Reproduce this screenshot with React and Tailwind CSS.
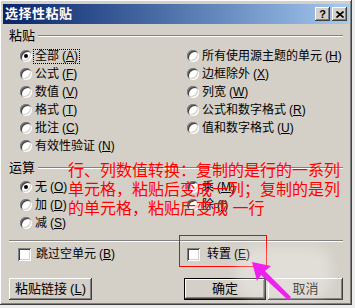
import React from 'react';

const raised =
  'shadow-[inset_-1px_-1px_0_#404040,inset_1px_1px_0_#ffffff,inset_-2px_-2px_0_#808080,inset_2px_2px_0_#d4d0c8]';

const K = ({ c }) => (
  <span className="ml-[3px]">
    (<span className="underline underline-offset-1">{c}</span>)
  </span>
);

const Radio = ({ checked }) => (
  <span className="relative inline-block w-[12px] h-[12px] shrink-0 rounded-full bg-white shadow-[inset_1px_1px_0_#808080,inset_-1px_-1px_0_#ffffff,inset_2px_2px_0_#404040,inset_-2px_-2px_0_#d4d0c8]">
    {checked && <span className="absolute left-[4px] top-[4px] w-[4px] h-[4px] rounded-full bg-black" />}
  </span>
);

const Check = () => (
  <span className="inline-block w-[13px] h-[13px] shrink-0 bg-white shadow-[inset_1px_1px_0_#808080,inset_-1px_-1px_0_#ffffff,inset_2px_2px_0_#404040,inset_-2px_-2px_0_#d4d0c8]" />
);

const Row = ({ label, k, checked, focus }) => (
  <div className="flex items-center h-[18px]">
    <Radio checked={checked} />
    <span className={`ml-[2px] px-[1px] leading-[13px] ${focus ? 'outline-1 outline-dotted outline-black' : ''}`}>
      {label}
      <K c={k} />
    </span>
  </div>
);

const Header = ({ label }) => (
  <div className="flex items-center h-[14px]">
    <span className="text-[13px]">{label}</span>
    <div className="flex-1 ml-[3px] h-[2px] border-t border-t-[#808080] border-b border-b-white" />
  </div>
);

const Button = ({ children, w, def }) => (
  <div
    className={`${w} h-[22px] flex items-center justify-center text-[13px] ${def ? 'border border-black' : ''} ${raised}`}
  >
    {children}
  </div>
);

export default function App() {
  return (
    <div
      className="relative w-[355px] h-[308px] bg-[#ececec] overflow-hidden text-black text-[12px]"
      style={{ fontFamily: '"Liberation Sans", "Noto Sans CJK SC", sans-serif' }}
    >
      <div className={`relative w-[352px] h-[305px] bg-[#d4d0c8] pt-[4px] ${raised}`}>
        {/* title bar */}
        <div className="mx-[3px] h-[20px] flex items-center bg-gradient-to-r from-[#0a246a] to-[#a6caf0]">
          <span className="pl-[2px] text-white font-bold text-[13px] tracking-[0.5px]">选择性粘贴</span>
          <div className="ml-auto mr-[2px] flex gap-[2px]">
            <div className={`w-[15px] h-[14px] bg-[#d4d0c8] flex items-center justify-center text-[11px] font-bold leading-none ${raised}`}>
              ?
            </div>
            <div className={`w-[15px] h-[14px] bg-[#d4d0c8] flex items-center justify-center ${raised}`}>
              <svg width="8" height="7" viewBox="0 0 8 7">
                <path d="M0.5 0.5 L7.5 6.5 M7.5 0.5 L0.5 6.5" stroke="black" strokeWidth="1.6" />
              </svg>
            </div>
          </div>
        </div>

        <div className="px-[9px]">
          <div className="mt-[5px]">
            <Header label="粘贴" />
          </div>
          <div className="mt-[4px] flex">
            <div className="w-[178px] pl-[11px]">
              <Row label="全部" k="A" checked focus />
              <Row label="公式" k="F" />
              <Row label="数值" k="V" />
              <Row label="格式" k="T" />
              <Row label="批注" k="C" />
              <Row label="有效性验证" k="N" />
            </div>
            <div>
              <Row label="所有使用源主题的单元" k="H" />
              <Row label="边框除外" k="X" />
              <Row label="列宽" k="W" />
              <Row label="公式和数字格式" k="R" />
              <Row label="值和数字格式" k="U" />
            </div>
          </div>

          <div className="mt-[6px]">
            <Header label="运算" />
          </div>
          <div className="mt-[3px] flex">
            <div className="w-[178px] pl-[11px]">
              <Row label="无" k="O" checked />
              <Row label="加" k="D" />
              <Row label="减" k="S" />
            </div>
            <div>
              <Row label="乘" k="M" />
              <Row label="除" k="I" />
            </div>
          </div>

          <div className="mt-[8px] h-[2px] border-t border-t-[#808080] border-b border-b-white" />

          <div className="mt-[5px] flex h-[14px] items-center">
            <div className="w-[178px] pl-[9px] flex items-center">
              <Check />
              <span className="ml-[5px]">
                跳过空单元
                <K c="B" />
              </span>
            </div>
            <div className="flex items-center">
              <Check />
              <span className="ml-[7px]">
                转置
                <K c="E" />
              </span>
            </div>
          </div>

          <div className="mt-[17px] flex">
            <Button w="w-[83px]">
              粘贴链接
              <K c="L" />
            </Button>
            <div className="ml-auto flex gap-[2px]">
              <Button w="w-[82px]" def>
                确定
              </Button>
              <Button w="w-[75px]">取消</Button>
            </div>
          </div>
        </div>
      </div>

      {/* annotation overlay */}
      <div className="absolute left-[68px] top-[161px] text-[16px] leading-[19px] text-[#ff0000] whitespace-nowrap">
        <div>行、列数值转换：复制的是行的一系列</div>
        <div>单元格，粘贴后变成一列；复制的是列</div>
        <div>的单元格，粘贴后变成 一行</div>
      </div>
      <div className="absolute left-[179px] top-[235px] w-[88px] h-[32px] border border-[#ff0000]" />
      <div className="absolute left-[236px] top-[246px] w-[95px] h-[54px] rounded-[20px] bg-white/30 blur-[6px]" />
      <svg className="absolute left-0 top-0 pointer-events-none" width="355" height="308" viewBox="0 0 355 308">
        <polygon points="252,262 271,266 265,271 291,297 288,300 261,275 257,281" fill="#f020f0" />
      </svg>
    </div>
  );
}
